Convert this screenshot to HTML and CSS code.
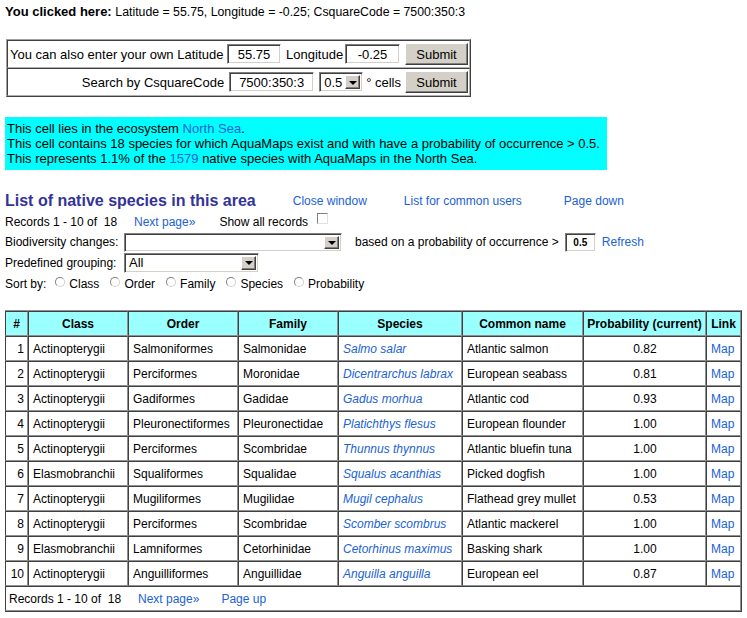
FILE: index.html
```html
<!DOCTYPE html>
<html>
<head>
<meta charset="utf-8">
<title>AquaMaps native species</title>
<link rel="stylesheet" href="styles.css">
</head>
<body>
<p class="clicked"><b>You clicked here:</b> <span class="where">Latitude = 55.75, Longitude = -0.25; CsquareCode = 7500:350:3</span></p>

<table class="coords">
  <tr><td>
    <div class="frow">
      <span class="lbl-lat">You can also enter your own Latitude</span>
      <input class="inp lat" type="text" value="55.75">
      <span class="lbl-lon">Longitude</span>
      <input class="inp lon" type="text" value="-0.25">
      <button class="btn" type="button">Submit</button>
    </div>
  </td></tr>
  <tr><td>
    <div class="frow end">
      <span>Search by CsquareCode</span>
      <input class="inp code" type="text" value="7500:350:3">
      <div class="sel sel-cells"><span class="sel-text">0.5</span><span class="sel-btn"><span class="tri"></span></span></div>
      <span class="deg">° cells</span>
      <button class="btn" type="button">Submit</button>
    </div>
  </td></tr>
</table>

<div class="eco">
  <div>This cell lies in the ecosystem <a href="#">North Sea</a>.</div>
  <div>This cell contains 18 species for which AquaMaps exist and with have a probability of occurrence &gt; 0.5.</div>
  <div>This represents 1.1% of the <a href="#">1579</a> native species with AquaMaps in the North Sea.</div>
</div>

<div class="headrow">
  <h1 class="title">List of native species in this area</h1>
  <a class="hl hl1" href="#">Close window</a>
  <a class="hl hl2" href="#">List for common users</a>
  <a class="hl hl3" href="#">Page down</a>
</div>

<div class="crow rec">
  <span class="reclbl">Records 1 - 10 of&nbsp; 18</span>
  <a class="next" href="#">Next page»</a>
  <span class="showall">Show all records</span>
  <input class="chk" type="checkbox">
</div>

<div class="crow bio">
  <span class="clbl">Biodiversity changes:</span>
  <div class="sel sel-bio"><span class="sel-text"></span><span class="sel-btn"><span class="tri"></span></span></div>
  <span class="based">based on a probability of occurrence &gt;</span>
  <input class="inp prob" type="text" value="0.5">
  <a class="refresh" href="#">Refresh</a>
</div>

<div class="crow grp">
  <span class="clbl">Predefined grouping:</span>
  <div class="sel sel-grp"><span class="sel-text">All</span><span class="sel-btn"><span class="tri"></span></span></div>
</div>

<div class="crow sort">
  <span class="sortlbl">Sort by:</span>
  <label class="opt"><input class="rad" type="radio" name="s">Class</label>
  <label class="opt"><input class="rad" type="radio" name="s">Order</label>
  <label class="opt"><input class="rad" type="radio" name="s">Family</label>
  <label class="opt"><input class="rad" type="radio" name="s">Species</label>
  <label class="opt"><input class="rad" type="radio" name="s">Probability</label>
</div>

<table class="species">
  <colgroup>
    <col class="c-n"><col class="c-class"><col class="c-order"><col class="c-family">
    <col class="c-sp"><col class="c-common"><col class="c-prob"><col class="c-link">
  </colgroup>
  <thead>
    <tr><th>#</th><th>Class</th><th>Order</th><th>Family</th><th>Species</th><th>Common name</th><th>Probability (current)</th><th>Link</th></tr>
  </thead>
  <tbody>
    <tr><td class="num">1</td><td>Actinopterygii</td><td>Salmoniformes</td><td>Salmonidae</td><td><a class="sp" href="#">Salmo salar</a></td><td>Atlantic salmon</td><td class="pr">0.82</td><td><a href="#">Map</a></td></tr>
    <tr><td class="num">2</td><td>Actinopterygii</td><td>Perciformes</td><td>Moronidae</td><td><a class="sp" href="#">Dicentrarchus labrax</a></td><td>European seabass</td><td class="pr">0.81</td><td><a href="#">Map</a></td></tr>
    <tr><td class="num">3</td><td>Actinopterygii</td><td>Gadiformes</td><td>Gadidae</td><td><a class="sp" href="#">Gadus morhua</a></td><td>Atlantic cod</td><td class="pr">0.93</td><td><a href="#">Map</a></td></tr>
    <tr><td class="num">4</td><td>Actinopterygii</td><td>Pleuronectiformes</td><td>Pleuronectidae</td><td><a class="sp" href="#">Platichthys flesus</a></td><td>European flounder</td><td class="pr">1.00</td><td><a href="#">Map</a></td></tr>
    <tr><td class="num">5</td><td>Actinopterygii</td><td>Perciformes</td><td>Scombridae</td><td><a class="sp" href="#">Thunnus thynnus</a></td><td>Atlantic bluefin tuna</td><td class="pr">1.00</td><td><a href="#">Map</a></td></tr>
    <tr><td class="num">6</td><td>Elasmobranchii</td><td>Squaliformes</td><td>Squalidae</td><td><a class="sp" href="#">Squalus acanthias</a></td><td>Picked dogfish</td><td class="pr">1.00</td><td><a href="#">Map</a></td></tr>
    <tr><td class="num">7</td><td>Actinopterygii</td><td>Mugiliformes</td><td>Mugilidae</td><td><a class="sp" href="#">Mugil cephalus</a></td><td>Flathead grey mullet</td><td class="pr">0.53</td><td><a href="#">Map</a></td></tr>
    <tr><td class="num">8</td><td>Actinopterygii</td><td>Perciformes</td><td>Scombridae</td><td><a class="sp" href="#">Scomber scombrus</a></td><td>Atlantic mackerel</td><td class="pr">1.00</td><td><a href="#">Map</a></td></tr>
    <tr><td class="num">9</td><td>Elasmobranchii</td><td>Lamniformes</td><td>Cetorhinidae</td><td><a class="sp" href="#">Cetorhinus maximus</a></td><td>Basking shark</td><td class="pr">1.00</td><td><a href="#">Map</a></td></tr>
    <tr><td class="num">10</td><td>Actinopterygii</td><td>Anguilliformes</td><td>Anguillidae</td><td><a class="sp" href="#">Anguilla anguilla</a></td><td>European eel</td><td class="pr">0.87</td><td><a href="#">Map</a></td></tr>
    <tr class="foot"><td colspan="8"><span class="reclbl">Records 1 - 10 of&nbsp; 18</span><a class="fnext" href="#">Next page»</a><a class="fup" href="#">Page up</a></td></tr>
  </tbody>
</table>
</body>
</html>
```

FILE: styles.css
```css
html, body {
  background: #ffffff;
}
body {
  margin: 4px 5px;
  font-family: "Liberation Sans", Arial, sans-serif;
  font-size: 12px;
  color: #000;
}
a {
  color: #1a62d5;
  text-decoration: none;
}

.clicked {
  margin: 0;
  font-size: 13px;
  line-height: 16px;
  white-space: nowrap;
}
.where {
  font-size: 12.3px;
}

/* coordinate form */
.coords {
  margin-top: 19px;
  margin-left: 1px;
  width: 464px;
  border-spacing: 0;
  border: 1px solid;
  border-color: #a0a0a0 #404040 #404040 #a0a0a0;
  font-size: 13px;
}
.coords td {
  border: 1px solid;
  border-color: #404040 #b0b0b0 #b0b0b0 #404040;
  padding: 2px 1px 2px 2px;
}
.frow {
  display: flex;
  align-items: center;
  gap: 5px;
  height: 22px;
  white-space: nowrap;
}
.frow > * {
  flex-shrink: 0;
}
.frow.end {
  justify-content: flex-end;
}
.lbl-lat {
  width: 212px;
}
.lbl-lon {
  width: 54px;
}
.deg {
  margin-left: -2px;
  margin-right: -1px;
}

.inp {
  box-sizing: border-box;
  height: 20px;
  margin: 0;
  padding: 0 2px;
  border: 1px solid;
  border-color: #808080 #ffffff #ffffff #808080;
  box-shadow: inset 1px 1px 0 #404040, inset -1px -1px 0 #d4d0c8;
  font-family: "Liberation Sans", Arial, sans-serif;
  font-size: 13px;
  text-align: center;
  color: #000;
  background: #fff;
}
.lat { width: 54px; }
.lon { width: 55px; }
.code { width: 85px; }

.btn {
  box-sizing: border-box;
  width: 63px;
  height: 22px;
  margin: 0;
  padding: 0;
  background: #d4d0c8;
  border: 1px solid;
  border-color: #ffffff #404040 #404040 #ffffff;
  box-shadow: inset -1px -1px 0 #808080;
  font-family: "Liberation Sans", Arial, sans-serif;
  font-size: 13px;
  color: #000;
}

/* fake select */
.sel {
  box-sizing: border-box;
  display: flex;
  align-items: stretch;
  height: 19px;
  border: 1px solid;
  border-color: #808080 #ffffff #ffffff #808080;
  box-shadow: inset 1px 1px 0 #404040, inset -1px -1px 0 #d4d0c8;
  background: #fff;
  padding: 2px;
}
.sel-text {
  flex: 1;
  display: flex;
  align-items: center;
  padding-left: 2px;
  font-size: 13px;
  line-height: 13px;
}
.sel-btn {
  box-sizing: border-box;
  width: 15px;
  display: flex;
  align-items: center;
  justify-content: center;
  background: #d4d0c8;
  border: 1px solid;
  border-color: #ffffff #404040 #404040 #ffffff;
  box-shadow: inset -1px -1px 0 #808080;
}
.tri {
  width: 0;
  height: 0;
  border-left: 4px solid transparent;
  border-right: 4px solid transparent;
  border-top: 4px solid #000;
  margin-top: 1px;
}
.sel-cells {
  width: 44px;
  height: 20px;
}
.sel-bio {
  width: 218px;
}
.sel-grp {
  width: 135px;
  height: 20px;
}

/* ecosystem box */
.eco {
  margin-top: 20px;
  width: 602px;
  box-sizing: border-box;
  padding: 4px 2px;
  background: #00ffff;
  font-size: 13px;
  line-height: 15px;
}

/* heading line */
.headrow {
  margin-top: 21px;
  display: flex;
  align-items: center;
  height: 20px;
}
.title {
  margin: 0;
  font-size: 16px;
  font-weight: bold;
  color: #333399;
}
.hl { font-size: 12px; }
.hl1 { margin-left: 37px; }
.hl2 { margin-left: 37px; }
.hl3 { margin-left: 42px; }

/* control rows */
.crow {
  display: flex;
  align-items: center;
  white-space: nowrap;
}
.rec { height: 21px; }
.reclbl {
  display: inline-block;
  width: 114px;
}
.next { margin-left: 15px; }
.showall { margin-left: 24px; }
.chk {
  appearance: none;
  -webkit-appearance: none;
  box-sizing: border-box;
  width: 11px;
  height: 11px;
  margin: 0 0 6px 9px;
  border: 1px solid;
  border-color: #808080 #e0e0e0 #e0e0e0 #808080;
  background: #fff;
}
.bio { height: 20px; }
.clbl {
  width: 119px;
}
.based { margin-left: 13px; }
.prob {
  width: 31px;
  height: 19px;
  margin-left: 6px;
  font-size: 10px;
  font-weight: bold;
}
.refresh { margin-left: 6px; }
.grp { height: 21px; }
.sort { height: 22px; }
.sortlbl { margin-right: 9px; }
.opt {
  display: inline-flex;
  align-items: center;
  margin-right: 11px;
}
.rad {
  appearance: none;
  -webkit-appearance: none;
  box-sizing: border-box;
  width: 10px;
  height: 10px;
  margin: 0 4px 5px 0;
  border-radius: 50%;
  border: 1px solid;
  border-color: #808080 #d4d0c8 #d4d0c8 #808080;
  background: #fff;
}

/* species table */
.species {
  margin-top: 15px;
  margin-left: -1px;
  width: 738px;
  table-layout: fixed;
  border-spacing: 0;
  border: 1px solid;
  border-color: #909090 #404040 #404040 #909090;
}
.c-n { width: 23px; }
.c-class { width: 100px; }
.c-order { width: 110px; }
.c-family { width: 100px; }
.c-sp { width: 124px; }
.c-common { width: 121px; }
.c-prob { width: 123px; }
.c-link { width: 35px; }
.species th,
.species td {
  box-sizing: border-box;
  height: 25px;
  border: 1px solid;
  border-color: #404040 #909090 #909090 #404040;
  padding: 0 3px 0 4px;
  white-space: nowrap;
  overflow: hidden;
}
.species th {
  background: #99ffff;
  font-weight: bold;
  text-align: center;
  padding: 0 2px;
}
.species td.num {
  text-align: right;
  padding: 0 3px 0 0;
}
.species td.pr {
  text-align: center;
}
.species a.sp {
  font-style: italic;
}
.foot td {
  padding-left: 3px;
}
.fnext { margin-left: 15px; }
.fup { margin-left: 22px; }
```
